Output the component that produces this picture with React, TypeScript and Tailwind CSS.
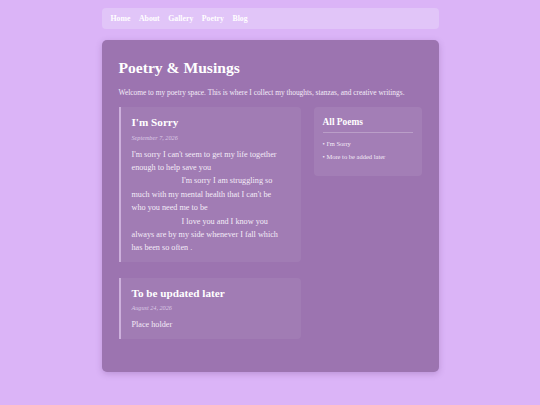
const serif = "font-['Georgia','Liberation_Serif',serif]";

function PoemCard({
  title,
  date,
  children,
}: {
  title: string;
  date: string;
  children: React.ReactNode;
}) {
  return (
    <div className="rounded-r-[4px] border-l-2 border-[#cdb0dc] bg-white/[0.06] pb-[7px] pl-[11px] pr-[15px] pt-[7px]">
      <h2 className="text-[11.2px] font-bold leading-[16px] text-white">{title}</h2>
      <p className="mt-[2.5px] text-[6.2px] italic leading-[9px] text-[#dccbe6]">{date}</p>
      <div className="mt-[6px] text-[8.2px] leading-[13.4px] text-[#f3ebf7]">{children}</div>
    </div>
  );
}

export default function App() {
  return (
    <div className={`min-h-[405px] bg-[#dbb4f7] pt-[8px] ${serif}`}>
      <nav className="mx-auto flex h-[21px] w-[337px] items-center gap-[8.5px] rounded-[4px] bg-[#e1c5f8] px-[9px] text-[7.8px] font-bold text-white">
        <a>Home</a>
        <a>About</a>
        <a>Gallery</a>
        <a>Poetry</a>
        <a>Blog</a>
      </nav>

      <main className="mx-auto mt-[11px] h-[332px] w-[337px] rounded-[5px] bg-[#9c74b0] px-[17px] pt-[18px] shadow-[0_2px_6px_rgba(90,50,120,0.25)]">
        <h1 className="text-[15.6px] font-bold leading-[20px] text-white">Poetry &amp; Musings</h1>
        <p className="mt-[10px] text-[7.4px] leading-[10px] text-[#f3ebf7]">
          Welcome to my poetry space. This is where I collect my thoughts, stanzas, and creative writings.
        </p>

        <div className="mt-[9px] grid grid-cols-[182px_108px] gap-[13px]">
          <div className="flex flex-col gap-[16px]">
            <PoemCard title="I'm Sorry" date="September 7, 2026">
              <p>
                I'm sorry I can't seem to get my life together enough to help save you
                <br />
                <span className="inline-block w-[50px]" />
                I'm sorry I am struggling so much with my mental health that I can't be who you need me to be
                <br />
                <span className="inline-block w-[50px]" />
                I love you and I know you always are by my side whenever I fall which has been so often .
              </p>
            </PoemCard>
            <PoemCard title="To be updated later" date="August 24, 2026">
              <p>Place holder</p>
            </PoemCard>
          </div>

          <aside className="self-start rounded-[4px] bg-white/[0.08] px-[9px] pb-[14.5px] pt-[9px]">
            <h3 className="text-[9.4px] font-bold leading-[12px] text-white">All Poems</h3>
            <div className="mt-[4px] h-px bg-white/25" />
            <ul className="mt-[6px] flex flex-col gap-[4px] text-[6.5px] leading-[9px] text-[#f3ebf7]">
              <li>• I'm Sorry</li>
              <li>• More to be added later</li>
            </ul>
          </aside>
        </div>
      </main>
    </div>
  );
}
